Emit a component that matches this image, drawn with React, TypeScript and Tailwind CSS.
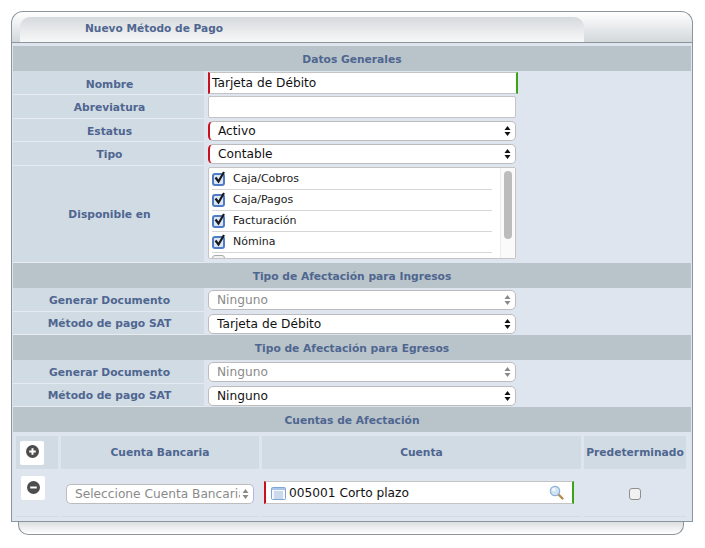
const labelCls = 'flex items-center justify-center bg-[#d1dbe4] border-b border-[#e6ebf1] pl-[2px] text-[10.7px] font-bold text-[#4f6690]';

function Arrows({ muted }: { muted?: boolean }) {
  const fill = muted ? '#8a8a8a' : '#111';
  return (
    <svg className="absolute right-[4px] top-1/2 -translate-y-1/2" width="7" height="11" viewBox="0 0 7 11">
      <path d="M3.5 0.5 L6.5 4.5 L0.5 4.5 Z" fill={fill} />
      <path d="M3.5 10.5 L6.5 6.5 L0.5 6.5 Z" fill={fill} />
    </svg>
  );
}

function FakeSelect({ value, required, muted, className }: { value: string; required?: boolean; muted?: boolean; className?: string }) {
  return (
    <div
      className={`relative flex h-[20px] items-center rounded-[5px] border border-[#bcbcbc] bg-white pt-[1px] pl-[8px] text-[12.2px] ${
        muted ? 'text-[#8a8a8a]' : 'text-[#111]'
      } ${required ? 'border-l-2 border-l-[#c8101e]' : ''} ${className ?? 'w-[308px]'}`}
    >
      <span className="overflow-hidden whitespace-nowrap">{value}</span>
      <Arrows muted={muted} />
    </div>
  );
}

function Row({ label, height, pad, children }: { label: string; height: string; pad: string; children: React.ReactNode }) {
  return (
    <div className={`grid grid-cols-[191px_1fr] ${height}`}>
      <div className={`${labelCls} ${pad}`}>{label}</div>
      <div className="flex items-center pl-[4px]">{children}</div>
    </div>
  );
}

function SectionBar({ title }: { title: string }) {
  return (
    <div className="flex h-[25px] items-center justify-center bg-[#b9c4ca] pt-[4px] text-[10.7px] font-bold text-[#4f6690]">
      {title}
    </div>
  );
}

function CheckItem({ label }: { label: string }) {
  return (
    <div className="flex h-[21px] w-[280px] items-center border-b border-[#d6d6d6]">
      <span className="relative h-[13px] w-[13px] rounded-[3px] border-2 border-[#4f7cc4] bg-[#dce7f6]">
        <svg className="absolute -top-[4px] -left-[1px]" width="13" height="13" viewBox="0 0 13 13">
          <path d="M2.5 6.5 L5.5 10.5 L11 1" fill="none" stroke="#1a1a1a" strokeWidth="2.2" />
        </svg>
      </span>
      <span className="ml-[8px] text-[11px] text-[#222]">{label}</span>
    </div>
  );
}

function ListIcon() {
  return (
    <svg className="mr-[3px] ml-[5px] shrink-0" width="15" height="13" viewBox="0 0 15 13">
      <rect x="0.5" y="0.5" width="14" height="12" rx="1" fill="#f4f8fd" stroke="#7fa5d6" />
      <path d="M1 2 H14" stroke="#a9c6ea" strokeWidth="2" />
      <path d="M3 5 H12 M3 7 H12 M3 9 H12 M3 11 H12" stroke="#a3bcd9" strokeWidth="1" />
    </svg>
  );
}

function SearchIcon() {
  return (
    <svg className="absolute right-[8px] top-[3px]" width="15" height="15" viewBox="0 0 15 15">
      <path d="M8.5 8.5 L13.5 13.5" stroke="#b98a4a" strokeWidth="2.4" strokeLinecap="round" />
      <circle cx="6" cy="6" r="4.7" fill="#cfe2f5" stroke="#8fb0d4" strokeWidth="1.2" />
      <circle cx="4.8" cy="4.6" r="1.8" fill="#f3f9ff" />
    </svg>
  );
}

function RoundButton({ sign }: { sign: 'plus' | 'minus' }) {
  return (
    <div className="flex h-[24px] w-[24px] items-center justify-center rounded-[2px] bg-white pb-[2px]">
      <svg width="13" height="13" viewBox="0 0 13 13">
        <circle cx="6.5" cy="6.5" r="6.5" fill="#4d4d4d" />
        <path d={sign === 'plus' ? 'M6.5 3.2 V9.8 M3.2 6.5 H9.8' : 'M3.2 6.5 H9.8'} stroke="#fff" strokeWidth="2" />
      </svg>
    </div>
  );
}

export default function App() {
  return (
    <div className="h-[548px] w-[705px] overflow-hidden bg-white pt-[11px] pl-[11px] font-['DejaVu_Sans',sans-serif]">
      <div className="w-[682px]">
        <div className="h-[31px] rounded-t-[12px] border border-b-0 border-[#8b959a] bg-gradient-to-b from-white to-[#d3d8db] pt-[5px] pl-[8px]">
          <div className="flex h-[25px] w-[564px] items-center rounded-t-[10px] bg-gradient-to-b from-[#d6dadd] to-[#f7f8f8] pb-[2px] pl-[65px] text-[10.6px] font-bold text-[#4f6690]">
            Nuevo Método de Pago
          </div>
        </div>
        <div className="border border-[#8b959a] bg-[#dfe5ee] pt-[3px] pr-[1px] pl-[1px]">
          <SectionBar title="Datos Generales" />
          <Row label="Nombre" height="h-[24px]" pad="pt-[6px]">
            <div className="flex h-[22px] w-[310px] items-center border-y border-[#c4c4c4] border-r-2 border-r-[#3aa517] border-l-2 border-l-[#c8101e] bg-white pt-[1px] pl-[2px] text-[12.2px] text-[#111]">
              Tarjeta de Débito
            </div>
          </Row>
          <Row label="Abreviatura" height="h-[24px]" pad="pt-[4px]">
            <div className="h-[22px] w-[308px] rounded-[2px] border border-[#c4c4c4] bg-white" />
          </Row>
          <Row label="Estatus" height="h-[23px]" pad="pt-[4px]">
            <FakeSelect value="Activo" required />
          </Row>
          <Row label="Tipo" height="h-[24px]" pad="pt-[4px]">
            <FakeSelect value="Contable" required />
          </Row>
          <div className="grid h-[97px] grid-cols-[191px_1fr]">
            <div className={`${labelCls} pt-[3px]`}>Disponible en</div>
            <div className="pt-[1px] pl-[4px]">
              <div className="relative h-[92px] w-[308px] overflow-hidden rounded-[2px] border border-[#c4c4c4] bg-white pt-[1px] pl-[3px]">
                <CheckItem label="Caja/Cobros" />
                <CheckItem label="Caja/Pagos" />
                <CheckItem label="Facturación" />
                <CheckItem label="Nómina" />
                <div className="mt-[2px] h-[13px] w-[13px] rounded-[3px] border border-[#aaa] bg-[#f2f2f2]" />
                <div className="absolute top-0 right-0 h-full w-[15px] border-l border-[#ececec] bg-[#fafafa]">
                  <div className="mt-[3px] ml-[3px] h-[68px] w-[8px] rounded-[4px] bg-[#bcbcbc]" />
                </div>
              </div>
            </div>
          </div>
          <SectionBar title="Tipo de Afectación para Ingresos" />
          <Row label="Generar Documento" height="h-[24px]" pad="pt-[4px]">
            <FakeSelect value="Ninguno" muted />
          </Row>
          <Row label="Método de pago SAT" height="h-[23px]" pad="pt-[2px]">
            <FakeSelect value="Tarjeta de Débito" />
          </Row>
          <SectionBar title="Tipo de Afectación para Egresos" />
          <Row label="Generar Documento" height="h-[24px]" pad="pt-[4px]">
            <FakeSelect value="Ninguno" muted />
          </Row>
          <Row label="Método de pago SAT" height="h-[23px]" pad="pt-[2px]">
            <FakeSelect value="Ninguno" />
          </Row>
          <SectionBar title="Cuentas de Afectación" />
          <div className="grid grid-cols-[42px_198px_319px_102px] gap-x-[3px] pt-[4px] pl-[3px] text-[10.7px] font-bold text-[#4f6690]">
            <div className="flex h-[33px] items-center bg-[#d1dbe4] pl-[4px]">
              <RoundButton sign="plus" />
            </div>
            <div className="flex h-[33px] items-center justify-center bg-[#d1dbe4] pt-[2px]">Cuenta Bancaria</div>
            <div className="flex h-[33px] items-center justify-center bg-[#d1dbe4] pt-[2px]">Cuenta</div>
            <div className="flex h-[33px] items-center justify-center bg-[#d1dbe4] pt-[2px]">Predeterminado</div>

            <div className="h-[48px] border-b border-[#d1dbe4] pt-[7px] pl-[5px]">
              <RoundButton sign="minus" />
            </div>
            <div className="h-[48px] border-b border-[#d1dbe4] pt-[15px] pl-[5px]">
              <FakeSelect value="Seleccione Cuenta Bancaria" muted className="w-[188px] border-r-[#b4b4e6] pr-[13px] font-normal" />
            </div>
            <div className="h-[48px] border-b border-[#d1dbe4] pt-[12px] pl-[2px]">
              <div className="relative flex h-[23px] w-[310px] items-center border-y border-[#c4c4c4] border-r-2 border-r-[#3aa517] border-l-2 border-l-[#c8101e] bg-white pt-[1px] text-[12.2px] font-normal text-[#111]">
                <ListIcon />
                005001 Corto plazo
                <SearchIcon />
              </div>
            </div>
            <div className="flex h-[48px] justify-center border-b border-[#d1dbe4] pt-[19px]">
              <div className="h-[12px] w-[12px] rounded-[3px] border border-[#8f8f8f] bg-[#f1f1f1]" />
            </div>
          </div>
          <div className="h-[4px]" />
        </div>
        <div className="ml-[7px] h-[13px] w-[666px] rounded-b-[10px] border border-t-0 border-[#8b959a] bg-gradient-to-b from-[#dcdfe1] to-white" />
      </div>
    </div>
  );
}
